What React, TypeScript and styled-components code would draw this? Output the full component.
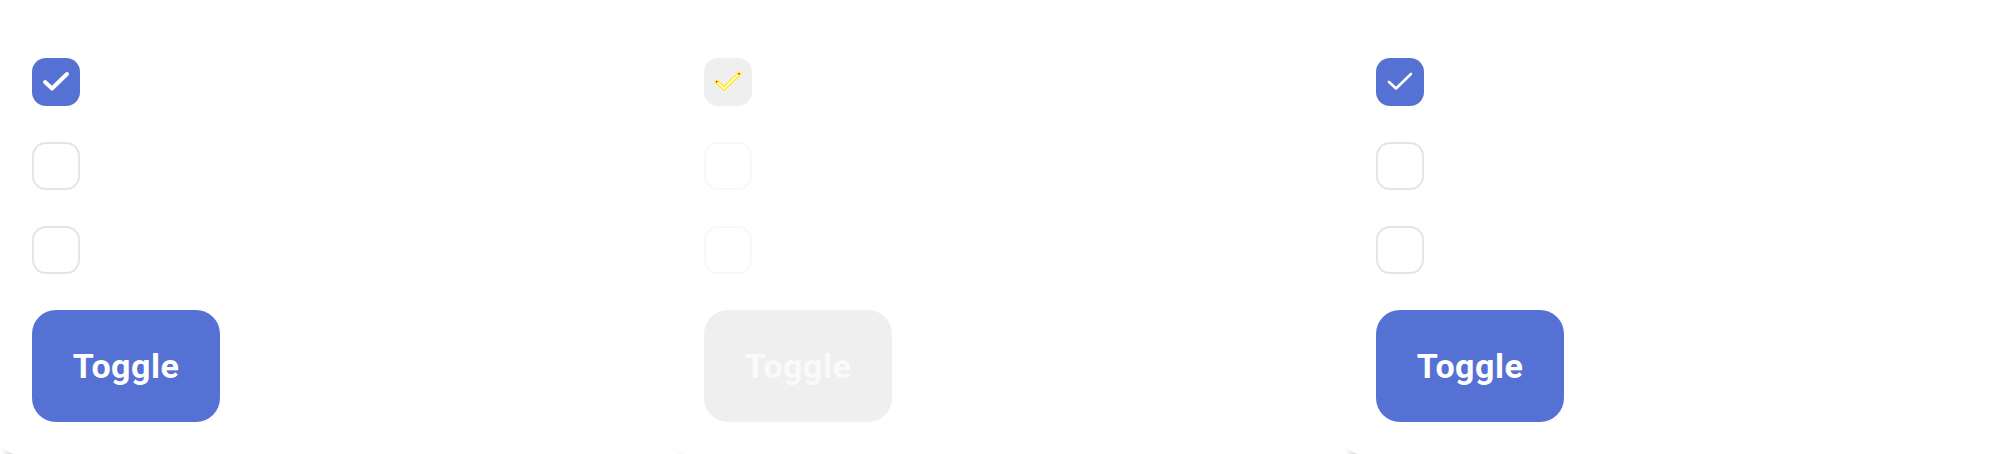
import React from "react";
import styled, { createGlobalStyle } from "styled-components";

const GlobalStyle = createGlobalStyle`
  html, body {
    margin: 0;
    padding: 0;
    background: #ffffff;
    font-family: Roboto, "Liberation Sans", sans-serif;
  }
  #root {
    width: 2016px;
    height: 454px;
    overflow: hidden;
  }
`;

const Row = styled.div`
  display: grid;
  grid-template-columns: repeat(3, 672px);
  height: 454px;
`;

const Panel = styled.section<{ $disabled?: boolean }>`
  position: relative;
  height: 454px;
  box-sizing: border-box;
  padding: 58px 32px 0 32px;
  background: #ffffff;
  border-bottom-left-radius: 16px;
  box-shadow: ${(p) =>
    p.$disabled
      ? "0 12px 6px -6px rgba(0, 0, 0, 0.04)"
      : "0 12px 6px -6px rgba(0, 0, 0, 0.16)"};
  display: flex;
  flex-direction: column;
  align-items: flex-start;
  gap: 36px;
`;

const Box = styled.div<{ $checked?: boolean; $disabled?: boolean }>`
  width: 48px;
  height: 48px;
  box-sizing: border-box;
  border-radius: 14px;
  display: flex;
  align-items: center;
  justify-content: center;
  background: ${(p) =>
    p.$checked ? (p.$disabled ? "#efefef" : "#5571d4") : "#ffffff"};
  border: ${(p) =>
    p.$checked
      ? "none"
      : p.$disabled
      ? "2px solid #f8f8f8"
      : "2px solid #e5e5e5"};
`;

const Button = styled.button<{ $disabled?: boolean }>`
  width: 188px;
  height: 112px;
  border: none;
  border-radius: 24px;
  background: ${(p) => (p.$disabled ? "#efefef" : "#5571d4")};
  color: ${(p) => (p.$disabled ? "#fafafa" : "#ffffff")};
  font-family: Roboto, "Liberation Sans", sans-serif;
  font-weight: 700;
  font-size: 34px;
  letter-spacing: 0.5px;
  padding: 0;
  margin: 0;
  cursor: pointer;
`;

const CheckPath = "M13 24 L20 30.5 L35 16";

function Check({ weight }: { weight: number }) {
  return (
    <svg width="48" height="48" viewBox="0 0 48 48">
      <path
        d={CheckPath}
        fill="none"
        stroke="#ffffff"
        strokeWidth={weight}
        strokeLinecap="round"
        strokeLinejoin="round"
      />
    </svg>
  );
}

function GhostCheck() {
  return (
    <svg width="48" height="48" viewBox="0 0 48 48">
      <path
        d={CheckPath}
        fill="none"
        stroke="#ffee00"
        strokeWidth={4}
        strokeLinecap="square"
        strokeLinejoin="miter"
      />
      <path
        d={CheckPath}
        fill="none"
        stroke="#ffffff"
        strokeWidth={1.6}
        strokeLinecap="butt"
      />
      <rect x="12" y="23" width="1.4" height="1.4" fill="#e00000" />
      <rect x="34.2" y="15.2" width="1.4" height="1.4" fill="#e00000" />
    </svg>
  );
}

type PanelProps = { variant: "bold" | "ghost" | "thin" };

function CheckPanel({ variant }: PanelProps) {
  const disabled = variant === "ghost";
  return (
    <Panel $disabled={disabled}>
      <Box $checked $disabled={disabled}>
        {variant === "ghost" ? (
          <GhostCheck />
        ) : (
          <Check weight={variant === "bold" ? 4 : 2.6} />
        )}
      </Box>
      <Box $disabled={disabled} />
      <Box $disabled={disabled} />
      <Button $disabled={disabled}>Toggle</Button>
    </Panel>
  );
}

export default function App() {
  return (
    <>
      <GlobalStyle />
      <Row>
        <CheckPanel variant="bold" />
        <CheckPanel variant="ghost" />
        <CheckPanel variant="thin" />
      </Row>
    </>
  );
}
